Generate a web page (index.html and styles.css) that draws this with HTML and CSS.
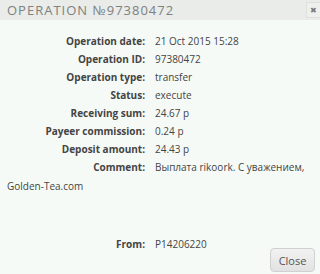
FILE: index.html
```html
<!DOCTYPE html>
<html lang="en">
<head>
    <meta charset="UTF-8">
    <title>Operation</title>
    <link rel="stylesheet" href="styles.css">
</head>
<body>
    <div class="dialog">
        <div class="dialog-title">
            <span class="title-text">Operation №97380472</span>
            <span class="close-icon">&#10006;</span>
        </div>
        <div class="dialog-body">
            <div class="row"><span class="label">Operation date:</span>21 Oct 2015 15:28</div>
            <div class="row"><span class="label">Operation ID:</span>97380472</div>
            <div class="row"><span class="label">Operation type:</span>transfer</div>
            <div class="row"><span class="label">Status:</span>execute</div>
            <div class="row"><span class="label">Receiving sum:</span>24.67 р</div>
            <div class="row"><span class="label">Payeer commission:</span>0.24 р</div>
            <div class="row"><span class="label">Deposit amount:</span>24.43 р</div>
            <div class="row comment"><span class="label">Comment:</span>Выплата rikoork. С уважением, Golden-Tea.com</div>
            <div class="row from"><span class="label">From:</span>P14206220</div>
        </div>
        <div class="dialog-buttons">
            <button class="btn">Close</button>
        </div>
    </div>
</body>
</html>
```

FILE: styles.css
```css
body {
    margin: 0;
    background-color: #f6faf6;
    font-family: "Open Sans", sans-serif;
    color: #444;
}
.dialog {
    width: 320px;
    height: 274px;
    display: flex;
    flex-direction: column;
}
.dialog-title {
    height: 20px;
    flex-shrink: 0;
    background-color: #e9ece9;
    display: flex;
    align-items: center;
    justify-content: space-between;
    padding-left: 7px;
}
.title-text {
    text-transform: uppercase;
    font-size: 13px;
    letter-spacing: 1px;
    color: #808080;
}
.close-icon {
    width: 13px;
    height: 14px;
    border: 1px solid #dde0dd;
    border-right: none;
    background-color: #eef0ee;
    color: #7b7b7b;
    font-size: 8px;
    line-height: 14px;
    text-align: center;
}
.dialog-body {
    flex: 1;
    min-height: 0;
    padding: 12px 7px 0;
    font-size: 10px;
}
.row {
    line-height: 18px;
}
.label {
    display: inline-block;
    vertical-align: top;
    width: 138px;
    margin-right: 10px;
    text-align: right;
    font-weight: bold;
    color: #444;
}
.comment {
    width: 300px;
    line-height: 19px;
}
.from {
    margin-top: 39px;
}
.dialog-buttons {
    flex-shrink: 0;
    display: flex;
    justify-content: flex-end;
    padding: 0 5px 2px 0;
}
.btn {
    width: 45px;
    height: 24px;
    font-family: "Open Sans", sans-serif;
    font-size: 11px;
    color: #555;
    background: linear-gradient(#f2f2f2, #e2e2e2);
    border: 1px solid #d0d0d0;
    border-radius: 4px;
    padding: 0;
}
```
